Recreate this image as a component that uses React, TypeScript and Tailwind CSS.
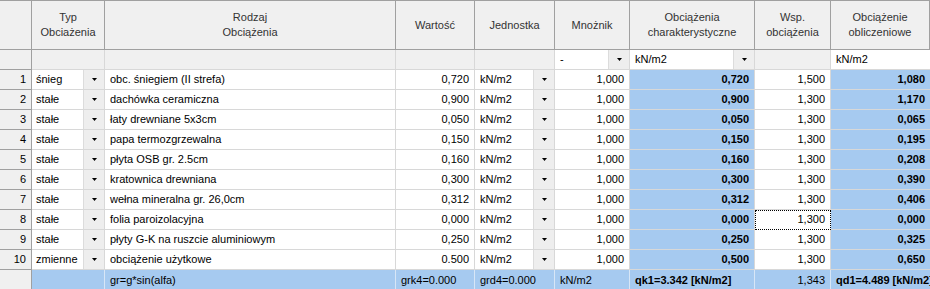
import React from 'react'

type Row = {
  typ: string
  rodzaj: string
  wartosc: string
  char: string
  wsp: string
  obl: string
}

const rows: Row[] = [
  { typ: 'śnieg', rodzaj: 'obc. śniegiem (II strefa)', wartosc: '0,720', char: '0,720', wsp: '1,500', obl: '1,080' },
  { typ: 'stałe', rodzaj: 'dachówka ceramiczna', wartosc: '0,900', char: '0,900', wsp: '1,300', obl: '1,170' },
  { typ: 'stałe', rodzaj: 'łaty drewniane 5x3cm', wartosc: '0,050', char: '0,050', wsp: '1,300', obl: '0,065' },
  { typ: 'stałe', rodzaj: 'papa termozgrzewalna', wartosc: '0,150', char: '0,150', wsp: '1,300', obl: '0,195' },
  { typ: 'stałe', rodzaj: 'płyta OSB gr. 2.5cm', wartosc: '0,160', char: '0,160', wsp: '1,300', obl: '0,208' },
  { typ: 'stałe', rodzaj: 'kratownica drewniana', wartosc: '0,300', char: '0,300', wsp: '1,300', obl: '0,390' },
  { typ: 'stałe', rodzaj: 'wełna mineralna gr. 26,0cm', wartosc: '0,312', char: '0,312', wsp: '1,300', obl: '0,406' },
  { typ: 'stałe', rodzaj: 'folia paroizolacyjna', wartosc: '0,000', char: '0,000', wsp: '1,300', obl: '0,000' },
  { typ: 'stałe', rodzaj: 'płyty G-K na ruszcie aluminiowym', wartosc: '0,250', char: '0,250', wsp: '1,300', obl: '0,325' },
  { typ: 'zmienne', rodzaj: 'obciążenie użytkowe', wartosc: '0.500', char: '0,500', wsp: '1,300', obl: '0,650' },
]

const cols = 'grid grid-cols-[32px_73px_291px_79px_80px_75px_125px_76px_99px]'

const DropButton = () => (
  <div className="flex h-full w-[21px] shrink-0 items-center justify-center border-l border-[#dcdcdc] bg-[#eeeeee]">
    <svg width="5" height="3" viewBox="0 0 5 3">
      <path d="M0 0h5L2.5 3z" fill="#000" />
    </svg>
  </div>
)

const Head = ({ children }: { children: React.ReactNode }) => (
  <div className="flex items-center justify-center border-r border-b border-[#a0a0a0] bg-[#f0f0f0] text-center leading-[15px] text-[#333]">
    {children}
  </div>
)

export default function App() {
  return (
    <div
      className="h-[289px] w-[930px] overflow-hidden bg-white text-[11px] text-black"
      style={{ fontFamily: '"Liberation Sans", Arial, sans-serif' }}
    >
      {/* header */}
      <div className={`${cols} h-[50px] border-t border-[#a0a0a0]`}>
        <Head>{''}</Head>
        <Head>
          Typ
          <br />
          Obciażenia
        </Head>
        <Head>
          Rodzaj
          <br />
          Obciążenia
        </Head>
        <Head>Wartość</Head>
        <Head>Jednostka</Head>
        <Head>Mnożnik</Head>
        <Head>
          Obciążenia
          <br />
          charakterystyczne
        </Head>
        <Head>
          Wsp.
          <br />
          obciążenia
        </Head>
        <Head>
          Obciążenie
          <br />
          obliczeniowe
        </Head>
      </div>

      {/* filter row */}
      <div className={`${cols} h-[20px]`}>
        <div className="border-r border-b border-[#a0a0a0] bg-[#f0f0f0]" />
        <div className="border-r border-b border-[#d8d8d8] bg-[#f0f0f0]" />
        <div className="border-r border-b border-[#d8d8d8] bg-[#f0f0f0]" />
        <div className="border-r border-b border-[#d8d8d8] bg-[#f0f0f0]" />
        <div className="border-r border-b border-[#d8d8d8] bg-[#f0f0f0]" />
        <div className="flex items-center border-r border-b border-[#d8d8d8] bg-white">
          <span className="flex-1 pl-[5px]">-</span>
          <DropButton />
        </div>
        <div className="flex items-center border-r border-b border-[#d8d8d8] bg-white">
          <span className="flex-1 pl-[5px]">kN/m2</span>
          <DropButton />
        </div>
        <div className="border-r border-b border-[#d8d8d8] bg-[#f0f0f0]" />
        <div className="flex items-center border-b border-[#d8d8d8] bg-white pl-[5px]">kN/m2</div>
      </div>

      {/* data rows */}
      {rows.map((r, i) => (
        <div key={i} className={`${cols} h-[20px]`}>
          <div className="flex items-center justify-end border-r border-b border-[#a0a0a0] bg-[#f0f0f0] pr-[5px]">
            {i + 1}
          </div>
          <div className="flex items-center border-r border-b border-[#d8d8d8]">
            <span className="flex-1 pl-[4px]">{r.typ}</span>
            <DropButton />
          </div>
          <div className="flex items-center border-r border-b border-[#d8d8d8] pl-[5px]">{r.rodzaj}</div>
          <div className="flex items-center justify-end border-r border-b border-[#d8d8d8] pr-[5px]">{r.wartosc}</div>
          <div className="flex items-center border-r border-b border-[#d8d8d8]">
            <span className="flex-1 pl-[5px]">kN/m2</span>
            <DropButton />
          </div>
          <div className="flex items-center justify-end border-r border-b border-[#d8d8d8] pr-[5px]">1,000</div>
          <div className="flex items-center justify-end border-r border-b border-[#d8d8d8] bg-[#a6caf0] pr-[5px] font-bold">
            {r.char}
          </div>
          <div
            className={`flex items-center justify-end border-r border-b pr-[5px] ${
              i === 7 ? 'border-dotted border-black outline-1 outline-dotted outline-black -outline-offset-1' : 'border-[#d8d8d8]'
            }`}
          >
            {r.wsp}
          </div>
          <div className="flex items-center justify-end border-b border-[#d8d8d8] bg-[#a6caf0] pr-[5px] font-bold">
            {r.obl}
          </div>
        </div>
      ))}

      {/* footer */}
      <div className={`${cols} h-[20px]`}>
        <div className="border-r border-[#a0a0a0] bg-[#f0f0f0]" />
        <div className="border-r border-[#d8e6f6] bg-[#a6caf0]" />
        <div className="flex items-center border-r border-[#d8e6f6] bg-[#a6caf0] pl-[5px]">gr=g*sin(alfa)</div>
        <div className="flex items-center border-r border-[#d8e6f6] bg-[#a6caf0] pl-[5px]">grk4=0.000</div>
        <div className="flex items-center border-r border-[#d8e6f6] bg-[#a6caf0] pl-[5px]">grd4=0.000</div>
        <div className="flex items-center border-r border-[#d8e6f6] bg-[#a6caf0] pl-[5px]">kN/m2</div>
        <div className="flex items-center border-r border-[#d8e6f6] bg-[#a6caf0] pl-[5px] font-bold">qk1=3.342 [kN/m2]</div>
        <div className="flex items-center justify-end border-r border-[#d8e6f6] bg-[#a6caf0] pr-[5px]">1,343</div>
        <div className="flex items-center whitespace-nowrap bg-[#a6caf0] pl-[5px] font-bold">qd1=4.489 [kN/m2]</div>
      </div>
    </div>
  )
}
